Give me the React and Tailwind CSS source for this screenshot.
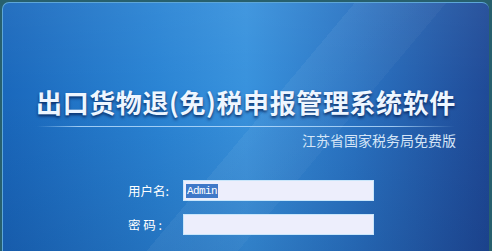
import React from "react";

const cjk = "font-['Noto_Sans_CJK_SC','Noto_Sans',sans-serif]";

export default function App() {
  return (
    <div className="w-[492px] h-[251px] overflow-hidden bg-[#27606e]">
      <div
        className={`ml-[2px] mr-[3px] mt-[2px] h-[260px] rounded-t-[7px] border-l border-t border-[#5da6d8] ${cjk} bg-[linear-gradient(130deg,rgba(255,255,255,0)_50%,rgba(255,255,255,0.05)_50%,rgba(255,255,255,0.03)_63%,rgba(255,255,255,0)_63%),linear-gradient(180deg,rgba(255,255,255,0.05)_0%,rgba(255,255,255,0)_35%,rgba(0,10,60,0.14)_100%),linear-gradient(90deg,#1a68bc_0%,#2a84d4_32%,#3892dd_50%,#2a74c3_72%,#1f4a97_100%)]`}
      >
        {/* title */}
        <div className="pt-[80px] text-center">
          <h1 className="text-[26px] leading-[38px] font-bold tracking-[0.6px] text-[#eef6ff] [text-shadow:0_2px_3px_rgba(0,20,70,0.75)]">
            出口货物退(免)税申报管理系统软件
          </h1>
        </div>
        <div className="mx-[34px] mt-[5px] h-px bg-[linear-gradient(90deg,rgba(190,225,255,0)_0%,rgba(190,225,255,0.8)_10%,rgba(190,225,255,0.8)_85%,rgba(190,225,255,0)_100%)]" />
        <div className="flex justify-end pr-[33px] pt-[3px]">
          <span className="text-[14px] leading-[20px] text-[#d5e5f7]">
            江苏省国家税务局免费版
          </span>
        </div>

        {/* login form */}
        <div className="mt-[30px] flex flex-col gap-[13px] pl-[125px]">
          <div className="flex items-center">
            <label className="w-[55px] text-[12.5px] leading-[20px] text-white">
              用户名:
            </label>
            <div className="flex h-[21px] w-[191px] items-center border border-[#c9e6fb] bg-[#edeefc] pl-[2px]">
              <span className="bg-[#3f78c8] px-[1px] font-['Liberation_Mono',monospace] text-[11px] leading-[14px] tracking-[-0.6px] text-white">
                Admin
              </span>
            </div>
          </div>
          <div className="flex items-center">
            <label className="w-[55px] whitespace-pre text-[12.5px] leading-[20px] text-white">
              密 码 :
            </label>
            <div className="h-[21px] w-[191px] border border-[#c9e6fb] bg-[#edeefc]" />
          </div>
        </div>
      </div>
    </div>
  );
}
